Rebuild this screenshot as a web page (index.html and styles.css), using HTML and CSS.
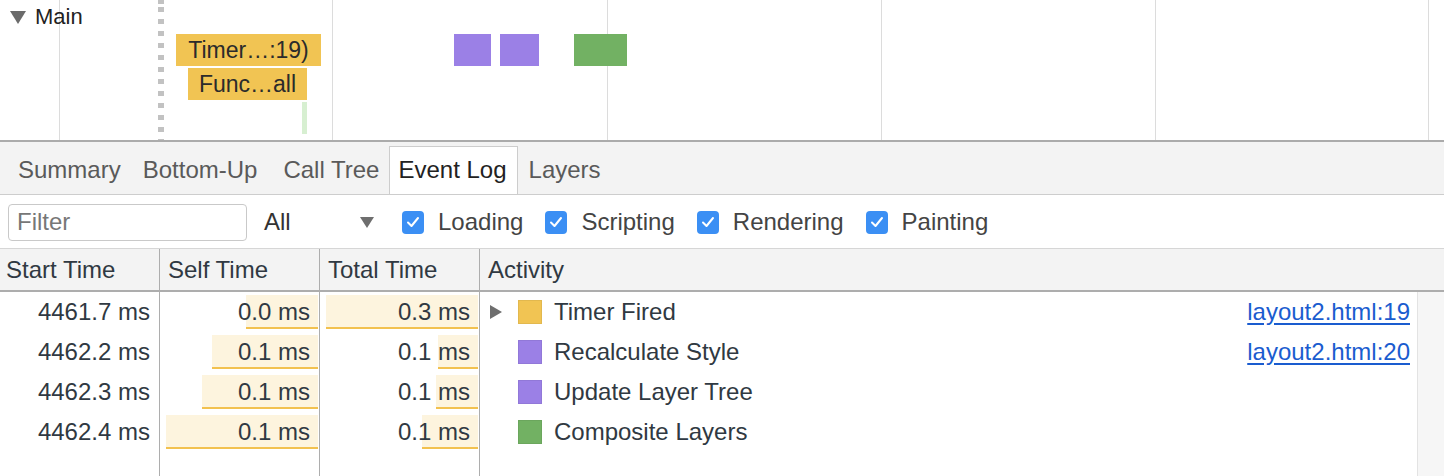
FILE: index.html
```html
<!DOCTYPE html>
<html>
<head>
<meta charset="utf-8">
<title>Performance - Event Log</title>
<link rel="stylesheet" href="styles.css">
</head>
<body>
<div class="app">
  <div class="timeline">
    <div class="gridline" style="left:59px"></div>
    <div class="gridline" style="left:332px"></div>
    <div class="gridline" style="left:607px"></div>
    <div class="gridline" style="left:881px"></div>
    <div class="gridline" style="left:1155px"></div>
    <div class="gridline" style="left:1428px"></div>
    <div class="marker"></div>
    <div class="track-header"><span class="tri-down"></span><span>Main</span></div>
    <div class="flame yellow" style="left:176px;top:34px;width:145px">Timer…:19)</div>
    <div class="flame yellow" style="left:188px;top:68px;width:119px">Func…all</div>
    <div class="flame light-green" style="left:302px;top:102px;width:5px"></div>
    <div class="flame purple" style="left:454px;top:34px;width:37px"></div>
    <div class="flame purple" style="left:500px;top:34px;width:39px"></div>
    <div class="flame green" style="left:574px;top:34px;width:53px"></div>
  </div>

  <div class="tabbar">
    <div class="tab">Summary</div>
    <div class="tab">Bottom-Up</div>
    <div class="tab">Call Tree</div>
    <div class="tab selected">Event Log</div>
    <div class="tab">Layers</div>
  </div>

  <div class="toolbar">
    <input class="filter" type="text" placeholder="Filter">
    <div class="select"><span>All</span><span class="tri-down small"></span></div>
    <label class="check"><span class="box"><svg viewBox="0 0 22 22" width="22" height="22"><polyline points="6,11.5 9.5,15 16,7" fill="none" stroke="#fff" stroke-width="2" stroke-linecap="round" stroke-linejoin="round"/></svg></span><span>Loading</span></label>
    <label class="check"><span class="box"><svg viewBox="0 0 22 22" width="22" height="22"><polyline points="6,11.5 9.5,15 16,7" fill="none" stroke="#fff" stroke-width="2" stroke-linecap="round" stroke-linejoin="round"/></svg></span><span>Scripting</span></label>
    <label class="check"><span class="box"><svg viewBox="0 0 22 22" width="22" height="22"><polyline points="6,11.5 9.5,15 16,7" fill="none" stroke="#fff" stroke-width="2" stroke-linecap="round" stroke-linejoin="round"/></svg></span><span>Rendering</span></label>
    <label class="check"><span class="box"><svg viewBox="0 0 22 22" width="22" height="22"><polyline points="6,11.5 9.5,15 16,7" fill="none" stroke="#fff" stroke-width="2" stroke-linecap="round" stroke-linejoin="round"/></svg></span><span>Painting</span></label>
  </div>

  <div class="log">
    <div class="hcell first">Start Time</div>
    <div class="hcell">Self Time</div>
    <div class="hcell">Total Time</div>
    <div class="hcell activity-head">Activity</div>

    <div class="cell num">4461.7 ms</div>
    <div class="cell num"><span class="bar" style="width:72px"></span><span class="val">0.0 ms</span></div>
    <div class="cell num"><span class="bar" style="width:152px"></span><span class="val">0.3 ms</span></div>
    <div class="cell act"><span class="tri-right"></span><span class="swatch yellow"></span><span>Timer Fired</span><a class="link" href="#">layout2.html:19</a></div>
    <div class="gutter"></div>

    <div class="cell num">4462.2 ms</div>
    <div class="cell num"><span class="bar" style="width:106px"></span><span class="val">0.1 ms</span></div>
    <div class="cell num"><span class="bar" style="width:40px"></span><span class="val">0.1 ms</span></div>
    <div class="cell act"><span class="tri-space"></span><span class="swatch purple"></span><span>Recalculate Style</span><a class="link" href="#">layout2.html:20</a></div>

    <div class="cell num">4462.3 ms</div>
    <div class="cell num"><span class="bar" style="width:116px"></span><span class="val">0.1 ms</span></div>
    <div class="cell num"><span class="bar" style="width:42px"></span><span class="val">0.1 ms</span></div>
    <div class="cell act"><span class="tri-space"></span><span class="swatch purple"></span><span>Update Layer Tree</span></div>

    <div class="cell num">4462.4 ms</div>
    <div class="cell num"><span class="bar" style="width:152px"></span><span class="val">0.1 ms</span></div>
    <div class="cell num"><span class="bar" style="width:56px"></span><span class="val">0.1 ms</span></div>
    <div class="cell act"><span class="tri-space"></span><span class="swatch green"></span><span>Composite Layers</span></div>

    <div class="cell filler"></div>
    <div class="cell filler"></div>
    <div class="cell filler"></div>
    <div class="cell filler last"></div>
  </div>
</div>
</body>
</html>
```

FILE: styles.css
```css
* { box-sizing: border-box; }
html, body { margin: 0; padding: 0; }
body {
  width: 1444px;
  height: 476px;
  overflow: hidden;
  background: #fff;
  font-family: "Liberation Sans", Arial, Helvetica, sans-serif;
  color: #333;
}
.app { display: flex; flex-direction: column; height: 476px; }

/* ---------- timeline ---------- */
.timeline {
  position: relative;
  height: 142px;
  flex: none;
  border-bottom: 2px solid #ababab;
  overflow: hidden;
}
.gridline {
  position: absolute;
  top: 0;
  bottom: 0;
  width: 1px;
  background: #dcdcdc;
}
.marker {
  position: absolute;
  left: 158px;
  top: 0;
  bottom: 0;
  width: 6px;
  background: repeating-linear-gradient(to bottom, #c2c2c2 0 5px, transparent 5px 12px);
  background-position: 0 7px;
}
.track-header {
  position: relative;
  display: flex;
  align-items: center;
  gap: 9px;
  padding: 4px 0 0 10px;
  font-size: 22px;
  line-height: 26px;
  color: #222;
}
.tri-down {
  display: inline-block;
  width: 0;
  height: 0;
  border-left: 8px solid transparent;
  border-right: 8px solid transparent;
  border-top: 13px solid #6b6b6b;
}
.tri-down.small {
  border-left-width: 7px;
  border-right-width: 7px;
  border-top-width: 11px;
  border-top-color: #6e6e6e;
}
.flame {
  position: absolute;
  height: 32px;
  font-size: 23px;
  line-height: 32px;
  color: #2b2b2b;
  text-align: center;
  white-space: nowrap;
  overflow: hidden;
}
.yellow { background: #f1c453; }
.purple { background: #9b80e6; }
.green { background: #72b163; }
.light-green { background: #d7efd1; }

/* ---------- tabs ---------- */
.tabbar {
  flex: none;
  height: 53px;
  display: flex;
  align-items: flex-end;
  padding-left: 7px;
  background: #f3f3f3;
  border-bottom: 1px solid #cdcdcd;
  font-size: 24px;
}
.tab {
  height: 48px;
  line-height: 46px;
  padding: 0 10px;
  border: 1px solid transparent;
  border-bottom: none;
  color: #5a5a5a;
  white-space: nowrap;
}
.tab:nth-child(2) { padding-right: 12px; }
.tab:nth-child(3) { padding-left: 12px; padding-right: 9px; }
.tab.selected {
  padding-left: 8px;
  background: #fff;
  border-color: #cdcdcd;
  color: #222;
}

/* ---------- toolbar ---------- */
.toolbar {
  flex: none;
  height: 54px;
  display: flex;
  align-items: center;
  padding: 1px 0 0 8px;
  border-bottom: 1px solid #d6d6d6;
  font-size: 24px;
  color: #444;
}
.filter {
  width: 239px;
  height: 37px;
  border: 1px solid #c9c9c9;
  border-radius: 4px;
  padding: 0 8px;
  font-family: inherit;
  font-size: 24px;
  color: #333;
  outline: none;
}
.filter::placeholder { color: #777; }
.select {
  display: flex;
  align-items: center;
  justify-content: space-between;
  width: 110px;
  margin-left: 17px;
  margin-right: 28px;
  color: #333;
}
.check {
  display: flex;
  align-items: center;
  gap: 14px;
  margin-right: 22px;
}
.box {
  width: 22px;
  height: 23px;
  border-radius: 4px;
  background: #3b8ff4;
  display: flex;
  align-items: center;
  justify-content: center;
}
.box svg { display: block; }

/* ---------- event log grid ---------- */
.log {
  flex: 1;
  display: grid;
  grid-template-columns: 160px 160px 160px 937px 27px;
  grid-template-rows: 43px repeat(4, 40px) 1fr;
  font-size: 24px;
  color: #303942;
}
.hcell {
  background: #f3f3f3;
  border-bottom: 2px solid #adadad;
  border-right: 1px solid #adadad;
  padding-left: 8px;
  line-height: 41px;
  white-space: nowrap;
}
.hcell.first { padding-left: 6px; }
.activity-head {
  grid-column: 4 / 6;
  border-right: none;
  padding-left: 8px;
}
.cell {
  position: relative;
  border-right: 1px solid #adadad;
  height: 40px;
  line-height: 40px;
  white-space: nowrap;
}
.cell.filler { height: auto; }
.cell.last { border-right: none; }
.num {
  text-align: right;
  padding-right: 9px;
}
.bar {
  position: absolute;
  right: 1px;
  top: 3px;
  height: 34px;
  background: #fdf4de;
  border-bottom: 2px solid #f2c14f;
}
.val { position: relative; }
.act {
  display: flex;
  align-items: center;
  padding-left: 10px;
  padding-right: 7px;
  border-right: none;
  color: #303942;
}
.tri-right, .tri-space {
  flex: none;
  width: 12px;
  height: 14px;
  margin-right: 16px;
}
.tri-right {
  border-left: 12px solid #6e6e6e;
  border-top: 7px solid transparent;
  border-bottom: 7px solid transparent;
}
.swatch {
  flex: none;
  width: 24px;
  height: 24px;
  margin-right: 12px;
  border: 1px solid rgba(0, 0, 0, 0.06);
}
.link {
  margin-left: auto;
  color: #1a5ccf;
  text-decoration: underline;
  text-underline-offset: 3px;
}
.gutter {
  grid-column: 5;
  grid-row: 2 / 7;
  background: #f6f6f6;
  border-left: 1px solid #e3e3e3;
}
```
